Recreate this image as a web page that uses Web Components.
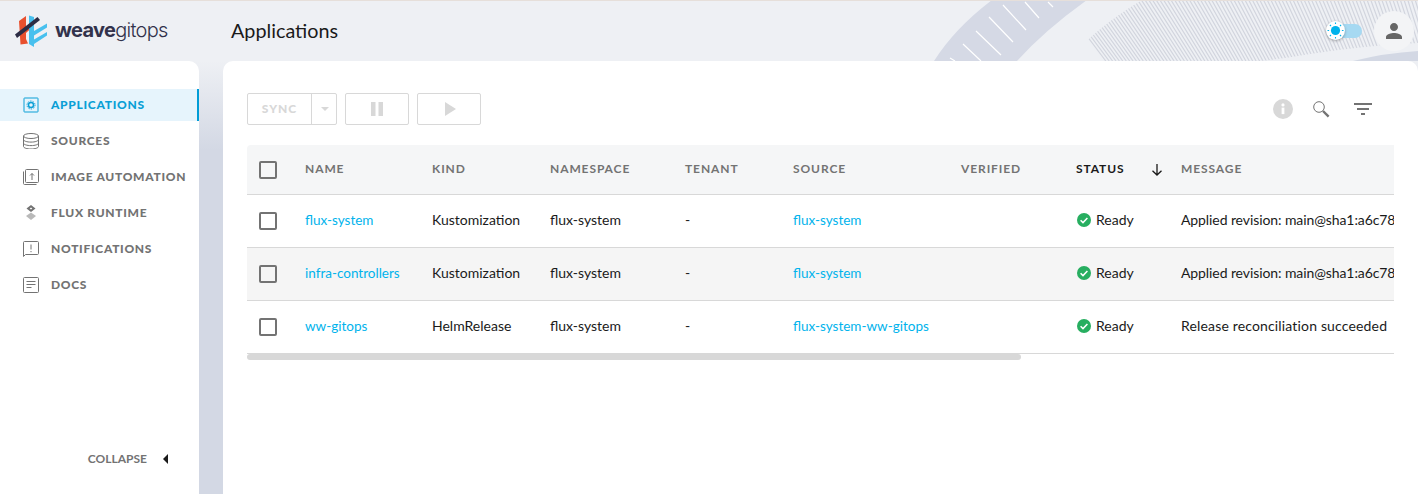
<!DOCTYPE html>
<html>
<head>
<meta charset="utf-8">
<title>Applications</title>
<style>
  html, body { margin: 0; padding: 0; height: 100%; overflow: hidden; }
  body { font-family: "Lato", "Liberation Sans", sans-serif; color: #1a1a1a; }
  a { color: #00b3ec; text-decoration: none; font-size: 13.5px; display: inline-block; margin-top: 1px; }
</style>
</head>
<body>
<app-shell>
  <top-bar slot="header" title="Applications"></top-bar>
  <side-nav slot="nav">
    <nav-item icon="apps" active>Applications</nav-item>
    <nav-item icon="sources">Sources</nav-item>
    <nav-item icon="image">Image Automation</nav-item>
    <nav-item icon="flux">Flux Runtime</nav-item>
    <nav-item icon="notifications">Notifications</nav-item>
    <nav-item icon="docs">Docs</nav-item>
  </side-nav>
  <content-card slot="main">
    <table-toolbar></table-toolbar>
    <data-table>
      <table-row header>
        <table-cell><check-box></check-box></table-cell>
        <table-cell>Name</table-cell>
        <table-cell>Kind</table-cell>
        <table-cell>Namespace</table-cell>
        <table-cell>Tenant</table-cell>
        <table-cell>Source</table-cell>
        <table-cell>Verified</table-cell>
        <table-cell sorted>Status</table-cell>
        <table-cell>Message</table-cell>
      </table-row>
      <table-row>
        <table-cell><check-box></check-box></table-cell>
        <table-cell><a href="#">flux-system</a></table-cell>
        <table-cell>Kustomization</table-cell>
        <table-cell>flux-system</table-cell>
        <table-cell>-</table-cell>
        <table-cell><a href="#">flux-system</a></table-cell>
        <table-cell></table-cell>
        <table-cell><ready-status></ready-status></table-cell>
        <table-cell message="tight">Applied revision: main@sha1:a6c7803f21e94b0d</table-cell>
      </table-row>
      <table-row shaded>
        <table-cell><check-box></check-box></table-cell>
        <table-cell><a href="#">infra-controllers</a></table-cell>
        <table-cell>Kustomization</table-cell>
        <table-cell>flux-system</table-cell>
        <table-cell>-</table-cell>
        <table-cell><a href="#">flux-system</a></table-cell>
        <table-cell></table-cell>
        <table-cell><ready-status></ready-status></table-cell>
        <table-cell message="tight">Applied revision: main@sha1:a6c7803f21e94b0d</table-cell>
      </table-row>
      <table-row>
        <table-cell><check-box></check-box></table-cell>
        <table-cell><a href="#">ww-gitops</a></table-cell>
        <table-cell>HelmRelease</table-cell>
        <table-cell>flux-system</table-cell>
        <table-cell>-</table-cell>
        <table-cell><a href="#">flux-system-ww-gitops</a></table-cell>
        <table-cell></table-cell>
        <table-cell><ready-status></ready-status></table-cell>
        <table-cell message="wide">Release reconciliation succeeded</table-cell>
      </table-row>
    </data-table>
  </content-card>
</app-shell>

<script>
(function () {
  const ICONS = {
    apps: `<rect x="1" y="1" width="14" height="14" rx="0.5" fill="none" stroke="currentColor" stroke-width="1"/>
      <circle cx="8" cy="8" r="2.5" fill="none" stroke="currentColor" stroke-width="1.4"/>
      <circle cx="8" cy="8" r="4" fill="none" stroke="currentColor" stroke-width="1" stroke-dasharray="1.4 1.1"/>`,
    sources: `<g fill="none" stroke="currentColor" stroke-width="1">
      <ellipse cx="8" cy="3" rx="7.5" ry="2.5"/>
      <path d="M.5 3v10.5c0 1.4 3.4 2.5 7.5 2.5s7.5-1.1 7.5-2.5V3"/>
      <path d="M.5 6.6c0 1.4 3.4 2.5 7.5 2.5s7.5-1.1 7.5-2.5"/>
      <path d="M.5 10.1c0 1.4 3.4 2.5 7.5 2.5s7.5-1.1 7.5-2.5"/></g>`,
    image: `<g fill="none" stroke="currentColor" stroke-width="1">
      <rect x="2.5" y="0.5" width="13" height="13" rx="1"/>
      <path d="M.5 2.5v12c0 .6.4 1 1 1h12"/>
      <path d="M9 11V4.5M7 6.5l2-2 2 2"/></g>`,
    flux: `<path d="M8 0l4.5 3.5L8 7 3.5 3.5z" fill="currentColor"/>
      <path d="M8 2.5l1.3 1L8 4.5l-1.3-1z" fill="#fff"/>
      <path d="M8 7.5l5 3.5-5 4-5-4z" fill="currentColor" opacity=".5"/>`,
    notifications: `<g fill="none" stroke="currentColor" stroke-width="1">
      <path d="M.5 1.5c0-.6.4-1 1-1h13c.6 0 1 .4 1 1v11c0 .6-.4 1-1 1H2.5L.5 15.5z"/>
      <path d="M8 3.5v5M8 10v1.2"/></g>`,
    docs: `<g fill="none" stroke="currentColor" stroke-width="1">
      <rect x="0.5" y="0.5" width="15" height="15" rx="1"/>
      <path d="M3.5 4.5h9M3.5 7.5h9M3.5 10.5h5"/></g>`
  };

  // fan of thin lines behind the header, leaning less towards the right
  function hatchLines() {
    let d = "";
    for (let x = 1060; x < 1430; x += 3.7) {
      const lean = 0.75 - (x - 1060) / 360 * 0.45;
      d += `M${x.toFixed(1)} 0L${(x + lean * 61).toFixed(1)} 61`;
    }
    return d;
  }

  class AppShell extends HTMLElement {
    constructor() {
      super();
      this.attachShadow({ mode: "open" }).innerHTML = `
      <style>
        :host {
          display: grid;
          grid-template-rows: 61px 433px;
          width: 1418px;
          height: 494px;
          overflow: hidden;
          background: linear-gradient(#eef0f4 61px, #d3d8e4 150px);
        }
        .body {
          display: grid;
          grid-template-columns: 199px 1fr;
          column-gap: 24px;
          min-height: 0;
        }
      </style>
      <slot name="header"></slot>
      <div class="body">
        <slot name="nav"></slot>
        <slot name="main"></slot>
      </div>`;
    }
  }

  class TopBar extends HTMLElement {
    constructor() {
      super();
      this.attachShadow({ mode: "open" }).innerHTML = `
      <style>
        :host {
          display: flex;
          align-items: center;
          position: relative;
          box-sizing: border-box;
          height: 61px;
          border-top: 1px solid #e6dfda;
          padding: 0 4px 0 15px;
          background: #eef0f4;
          overflow: hidden;
        }
        .decor { position: absolute; left: 0; top: -1px; width: 1418px; height: 61px; }
        .logo { display: flex; align-items: center; width: 216px; position: relative; }
        .logo svg { width: 33px; height: 33px; margin-right: 7px; flex: none; }
        .word { font-family: "Inter", "Liberation Sans", sans-serif; font-size: 20px; letter-spacing: -0.7px; color: #32324b; line-height: 1; padding-bottom: 2px; }
        .word b { font-weight: 700; }
        .word span { font-weight: 300; }
        h1 {
          margin: 0; flex: 1; position: relative; padding-bottom: 2px;
          font-size: 19.8px; font-weight: 400; color: #1a1a1a;
        }
        .toggle { position: relative; width: 26px; height: 14px; border-radius: 7px; background: #a6d9f2; margin-right: 12px; }
        .knob {
          position: absolute; left: -10px; top: -3px; width: 19px; height: 19px;
          border-radius: 50%; background: #fff; box-shadow: 0 1px 3px rgba(0,0,0,.3);
          display: flex; align-items: center; justify-content: center;
        }
        .avatar {
          position: relative; width: 40px; height: 40px; border-radius: 50%; background: #f3f4f6;
          display: flex; align-items: center; justify-content: center;
        }
      </style>
      <svg class="decor" viewBox="0 0 1418 61">
        <defs>
          <clipPath id="hatch-area"><path d="M1068 61Q1095 28 1142 0H1418V43Q1360 46 1310 54Q1280 59 1260 61Z"/></clipPath>
        </defs>
        <path d="${hatchLines()}" clip-path="url(#hatch-area)" stroke="#d2d5de" stroke-width="1.2" fill="none"/>
        <path d="M934 61Q955 28 992 0H1087Q1045 30 1017 61Z" fill="#d5d9e5"/>
        <g stroke="#fff" stroke-width="1.2" fill="none">
          <path d="M950 58l5 3M963 44l18 17M976 31l25 24M989 17l24 25M1003 5l23 25M1025 2l14 16M1048 2l5 5"/>
        </g>
        <path d="M1353 61Q1385 53 1418 51V61Z" fill="#d3d8e4"/>
      </svg>
      <div class="logo">
        <svg viewBox="15 15 33 33">
          <path d="M19 21L26 16V39L28 43.5 20.5 44.5z" fill="#e8502e"/>
          <path d="M26 28L32 23v4.5L26 33z" fill="#e8502e"/>
          <path d="M29 15.5l5 1.5V47l-5-3z" fill="#48c0ee"/>
          <path d="M34 31L47 23.5v4L34 35.5z" fill="#48c0ee"/>
          <path d="M34 39.5L47 32v3.5L34 44z" fill="#48c0ee"/>
          <path d="M15 34.5L37.5 17 40 20 17 38z" fill="#2c2c44"/>
        </svg>
        <div class="word"><b>weave</b><span>gitops</span></div>
      </div>
      <h1></h1>
      <div class="toggle">
        <div class="knob">
          <svg width="17" height="17" viewBox="0 0 17 17">
            <circle cx="8.5" cy="8.5" r="4.6" fill="#00b3ec"/>
            <path stroke="#00b3ec" stroke-width="1.1" d="M8.5 0.5v1.6M8.5 14.9v1.6M.5 8.5h1.6M14.9 8.5h1.6M2.9 2.9l1.1 1.1M13 13l1.1 1.1M14.1 2.9L13 4M4 13l-1.1 1.1"/>
          </svg>
        </div>
      </div>
      <div class="avatar">
        <svg width="24" height="24" viewBox="0 0 24 24" fill="#666">
          <path d="M12 12c2.21 0 4-1.79 4-4s-1.79-4-4-4-4 1.79-4 4 1.79 4 4 4zm0 2c-2.67 0-8 1.34-8 4v2h16v-2c0-2.66-5.33-4-8-4z"/>
        </svg>
      </div>`;
      this.shadowRoot.querySelector("h1").textContent = this.getAttribute("title");
    }
  }

  class SideNav extends HTMLElement {
    constructor() {
      super();
      this.attachShadow({ mode: "open" }).innerHTML = `
      <style>
        :host {
          display: flex;
          flex-direction: column;
          height: 100%;
          box-sizing: border-box;
          padding-top: 28px;
          background: #fff;
          border-top-right-radius: 10px;
        }
        .items { flex: 1; display: flex; flex-direction: column; gap: 4px; }
        .collapse {
          display: flex; align-items: center; justify-content: flex-end;
          gap: 16px; padding: 0 31px 27px 0;
          font-size: 12px; font-weight: 700; color: #737373; line-height: 16px;
        }
        .tri { width: 0; height: 0; border: 5px solid transparent; border-right: 5px solid #1a1a1a; border-left: 0; }
      </style>
      <div class="items"><slot></slot></div>
      <div class="collapse"><span>COLLAPSE</span><i class="tri"></i></div>`;
    }
  }

  class NavItem extends HTMLElement {
    constructor() {
      super();
      this.attachShadow({ mode: "open" }).innerHTML = `
      <style>
        :host {
          display: flex;
          align-items: center;
          box-sizing: border-box;
          height: 32px;
          padding-left: 23px;
          color: #737373;
          font-size: 12px;
          font-weight: 900;
          letter-spacing: 0.7px;
          text-transform: uppercase;
        }
        :host([active]) {
          background: #e6f4fc;
          color: #0a9fd6;
          border-right: 2px solid #009cd6;
        }
        svg { width: 16px; height: 16px; margin-right: 12px; flex: none; }
        .label { padding-bottom: 2px; }
      </style>
      <svg viewBox="0 0 16 16">${ICONS[this.getAttribute("icon")]}</svg><span class="label"><slot></slot></span>`;
    }
  }

  class ContentCard extends HTMLElement {
    constructor() {
      super();
      this.attachShadow({ mode: "open" }).innerHTML = `
      <style>
        :host {
          display: flex;
          flex-direction: column;
          gap: 20px;
          height: 100%;
          box-sizing: border-box;
          min-width: 0;
          padding: 32px 24px 0;
          background: #fff;
          border-top-left-radius: 10px;
          border-top-right-radius: 10px;
        }
      </style>
      <slot></slot>`;
    }
  }

  class TableToolbar extends HTMLElement {
    constructor() {
      super();
      this.attachShadow({ mode: "open" }).innerHTML = `
      <style>
        :host { display: flex; align-items: center; height: 32px; gap: 8px; }
        .btn {
          box-sizing: border-box; height: 32px; width: 64px;
          border: 1px solid #d8d8d8; border-radius: 2px;
          display: flex; align-items: center; justify-content: center;
        }
        .sync { width: 90px; justify-content: flex-start; }
        .sync span {
          width: 63px; text-align: center; line-height: 30px; border-right: 1px solid #d8d8d8;
          font-size: 12px; font-weight: 900; letter-spacing: 1px; color: #d8d8d8;
        }
        .caret { width: 0; height: 0; margin-left: 9px; border: 4px solid transparent; border-top: 4px solid #d8d8d8; border-bottom: 0; }
        .play { padding-left: 2px; }
        .tools { margin-left: auto; display: flex; align-items: center; gap: 19px; padding-right: 22px; }
        .tools svg { display: block; }
      </style>
      <div class="btn sync"><span>SYNC</span><i class="caret"></i></div>
      <div class="btn">
        <svg width="14" height="14" viewBox="0 0 14 14" fill="#d8d8d8"><rect x="1" y="0" width="4.5" height="14"/><rect x="8.5" y="0" width="4.5" height="14"/></svg>
      </div>
      <div class="btn play">
        <svg width="11" height="14" viewBox="0 0 11 14" fill="#d8d8d8"><path d="M0 0l11 7-11 7z"/></svg>
      </div>
      <div class="tools">
        <svg width="20" height="20" viewBox="0 0 20 20"><circle cx="10" cy="10" r="10" fill="#d8d8d8"/><rect x="8.6" y="8.6" width="2.8" height="6.5" fill="#fff"/><circle cx="10" cy="5.9" r="1.6" fill="#fff"/></svg>
        <svg width="18" height="18" viewBox="0 0 18 18" fill="none" stroke="#737373"><circle cx="7" cy="7" r="5.3" stroke-width="1"/><path d="M11 11l5.6 5.6" stroke-width="2.4"/></svg>
        <svg width="18" height="12" viewBox="0 0 18 12" fill="#737373" style="margin-left:5px"><rect y="0" width="18" height="2"/><rect x="3" y="5" width="12" height="2"/><rect x="7" y="10" width="4" height="2"/></svg>
      </div>`;
    }
  }

  class DataTable extends HTMLElement {
    constructor() {
      super();
      this.attachShadow({ mode: "open" }).innerHTML = `
      <style>
        :host { display: block; overflow: hidden; }
        .rows { width: 1700px; }
        .track { height: 6px; background: #fff; }
        .thumb { width: 774px; height: 6px; background: #d8d8d8; border-radius: 3px; }
      </style>
      <div class="rows"><slot></slot></div>
      <div class="track"><div class="thumb"></div></div>`;
    }
  }

  class TableRow extends HTMLElement {
    constructor() {
      super();
      this.attachShadow({ mode: "open" }).innerHTML = `
      <style>
        :host {
          --cell-shift: 3px;
          display: grid;
          grid-template-columns: 58px 127px 118px 135px 108px 168px 115px 105px 1fr;
          align-items: center;
          box-sizing: border-box;
          height: 53px;
          border-bottom: 1px solid #d8d8d8;
          font-size: 14px;
          color: #1a1a1a;
        }
        :host([shaded]) { background: #f5f5f5; }
        :host([header]) {
          --cell-shift: 2px;
          height: 50px;
          background: #f5f6f7;
          border-top-left-radius: 4px;
          border-top-right-radius: 4px;
          color: #737373;
          font-size: 12px;
          font-weight: 700;
          letter-spacing: 0.9px;
          text-transform: uppercase;
        }
      </style>
      <slot></slot>`;
    }
  }

  class TableCell extends HTMLElement {
    constructor() {
      super();
      const root = this.attachShadow({ mode: "open" });
      root.innerHTML = `
      <style>
        :host { display: flex; align-items: center; white-space: nowrap; min-width: 0; padding-bottom: var(--cell-shift, 0); }
        :host([sorted]) { color: #1a1a1a; }
        :host([message="wide"]) { letter-spacing: 0.16px; }
        :host([message="tight"]) { letter-spacing: -0.09px; }
        .sort { display: inline-flex; margin-left: 26px; padding-top: 2px; }
        .sort svg { display: block; }
      </style>
      <slot></slot>`;
      if (this.hasAttribute("sorted")) {
        const s = document.createElement("span");
        s.className = "sort";
        s.innerHTML = `<svg width="12" height="12" viewBox="0 0 12 12" fill="none" stroke="#1a1a1a" stroke-width="1.3"><path d="M6 0v11M1.5 6.8L6 11l4.5-4.2"/></svg>`;
        root.appendChild(s);
      }
    }
  }

  class CheckBox extends HTMLElement {
    constructor() {
      super();
      this.attachShadow({ mode: "open" }).innerHTML = `
      <style>
        :host {
          display: block; box-sizing: border-box; width: 18px; height: 18px; margin: var(--cell-shift, 0) 0 0 12px;
          border: 2px solid #737373; border-radius: 2px;
        }
      </style>`;
    }
  }

  class ReadyStatus extends HTMLElement {
    constructor() {
      super();
      this.attachShadow({ mode: "open" }).innerHTML = `
      <style>
        :host { display: flex; align-items: center; gap: 5px; margin-left: 1px; }
        svg { display: block; margin-top: 1px; }
      </style>
      <svg width="14" height="14" viewBox="0 0 14 14"><circle cx="7" cy="7" r="7" fill="#27ae60"/><path d="M3.6 7.2l2.4 2.4 4.4-4.6" fill="none" stroke="#fff" stroke-width="1.5"/></svg><span>Ready</span>`;
    }
  }

  customElements.define("app-shell", AppShell);
  customElements.define("top-bar", TopBar);
  customElements.define("side-nav", SideNav);
  customElements.define("nav-item", NavItem);
  customElements.define("content-card", ContentCard);
  customElements.define("table-toolbar", TableToolbar);
  customElements.define("data-table", DataTable);
  customElements.define("table-row", TableRow);
  customElements.define("table-cell", TableCell);
  customElements.define("check-box", CheckBox);
  customElements.define("ready-status", ReadyStatus);
})();
</script>
</body>
</html>
